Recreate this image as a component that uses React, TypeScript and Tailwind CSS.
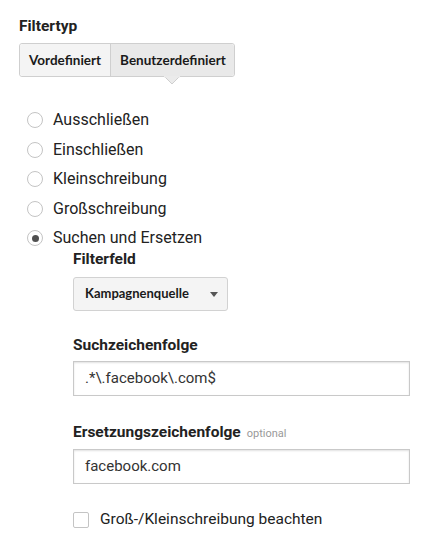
import React from 'react';

const options = [
  'Ausschließen',
  'Einschließen',
  'Kleinschreibung',
  'Großschreibung',
  'Suchen und Ersetzen',
];

const Radio = ({ checked }: { checked?: boolean }) => (
  <span className="flex h-4 w-4 flex-shrink-0 items-center justify-center rounded-full border-[1.5px] border-[#c4c4c4] bg-white">
    {checked && <span className="h-[7px] w-[7px] rounded-full bg-[#505050]" />}
  </span>
);

export default function App() {
  return (
    <div className="min-h-[539px] w-[429px] bg-white pl-[19px] pt-[16px] font-['Roboto',sans-serif] text-[#222]">
      {/* Filtertyp */}
      <div className="text-[15.5px] font-bold leading-5">Filtertyp</div>

      <div className="mt-[7px] flex h-[34px] w-max rounded-[3px] border border-[#cfcfcf] font-['Lato',sans-serif] text-[13.5px] font-bold">
        <button className="h-full rounded-l-[3px] bg-[#f4f4f4] px-[9px] text-[#1a1a1a]">Vordefiniert</button>
        <button className="relative h-full rounded-r-[3px] border-l border-[#cfcfcf] bg-[#e9e9e9] pl-[9px] pr-[8px] text-[#1a1a1a]">
          Benutzerdefiniert
          <svg className="absolute left-1/2 top-[32px] -ml-[8px]" width="16" height="10" viewBox="0 0 16 10">
            <polygon points="0,0 8,8 16,0" fill="#ebebeb" stroke="#cfcfcf" strokeWidth="1" />
            <line x1="0" y1="0.5" x2="16" y2="0.5" stroke="#ebebeb" strokeWidth="2" />
          </svg>
        </button>
      </div>

      {/* Radio list */}
      <div className="mt-[33px] flex flex-col gap-[9.5px] pl-[8px]">
        {options.map((o, i) => (
          <label key={o} className="flex h-5 items-center gap-[10px] text-[16px] leading-5">
            <Radio checked={i === 4} />
            <span>{o}</span>
          </label>
        ))}
      </div>

      {/* Suchen und Ersetzen details */}
      <div className="pl-[54px] pr-[19px]">
        <div className="mt-[1px] text-[15.5px] font-bold leading-5">Filterfeld</div>
        <button className="mt-[8px] flex h-[34px] w-[155px] items-center justify-between rounded-[3px] border border-[#d2d2d2] bg-[#f4f4f4] pl-[11px] pr-[9px] font-['Lato',sans-serif] text-[13px] font-bold text-[#1a1a1a]">
          <span>Kampagnenquelle</span>
          <svg width="8" height="5" viewBox="0 0 8 5">
            <polygon points="0,0 8,0 4,5" fill="#555" />
          </svg>
        </button>

        <div className="mt-[24px] text-[15.5px] font-bold leading-5">Suchzeichenfolge</div>
        <div className="mt-[6px] flex h-[35px] w-[337px] items-center border border-[#c9c9c9] pl-[11px] text-[15px] text-[#333] shadow-[inset_0_1px_2px_rgba(0,0,0,0.12)]">
          .*\.facebook\.com$
        </div>

        <div className="mt-[26px] flex items-baseline gap-[6px] leading-5">
          <span className="text-[15.5px] font-bold">Ersetzungszeichenfolge</span>
          <span className="text-[11px] text-[#999]">optional</span>
        </div>
        <div className="mt-[5px] flex h-[35px] w-[337px] items-center border border-[#c9c9c9] pl-[11px] text-[15px] text-[#333] shadow-[inset_0_1px_2px_rgba(0,0,0,0.12)]">
          facebook.com
        </div>

        <label className="mt-[26px] flex h-5 items-center gap-[11px] text-[15.5px]">
          <span className="h-4 w-4 rounded-[2px] border-[1.5px] border-[#c4c4c4] bg-white" />
          <span>Groß-/Kleinschreibung beachten</span>
        </label>
      </div>
    </div>
  );
}
